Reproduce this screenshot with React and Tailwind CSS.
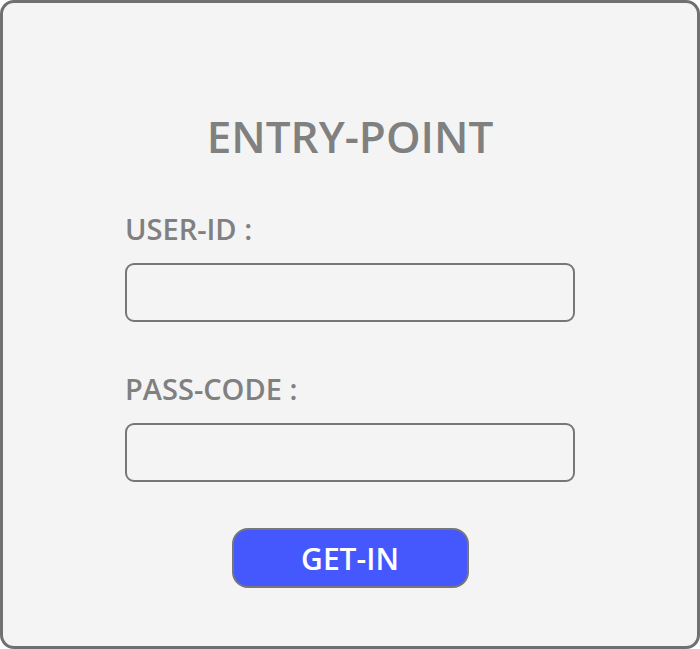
export default function App() {
  return (
    <div className="w-[700px] h-[649px] bg-[#f4f4f4] border-[3px] border-[#707070] rounded-[14px] flex flex-col items-center" style={{ fontFamily: '"Open Sans", sans-serif' }}>
      <h1 className="mt-[105px] text-[44px] leading-[56px] font-semibold text-[#808080]">ENTRY-POINT</h1>
      <div className="w-[450px] mt-[49px] flex flex-col">
        <label className="text-[29px] leading-[32px] font-semibold text-[#808080]">USER-ID :</label>
        <input className="mt-[18px] h-[59px] border-2 border-[#777777] rounded-[9px] bg-transparent outline-none" />
        <label className="mt-[51px] text-[29px] leading-[32px] font-semibold text-[#808080]">PASS-CODE :</label>
        <input type="password" className="mt-[18px] h-[59px] border-2 border-[#777777] rounded-[9px] bg-transparent outline-none" />
      </div>
      <button className="mt-[46px] w-[237px] h-[60px] bg-[#4458fe] border-2 border-[#777777] rounded-[16px] text-white text-[30px] font-semibold">GET-IN</button>
    </div>
  );
}
